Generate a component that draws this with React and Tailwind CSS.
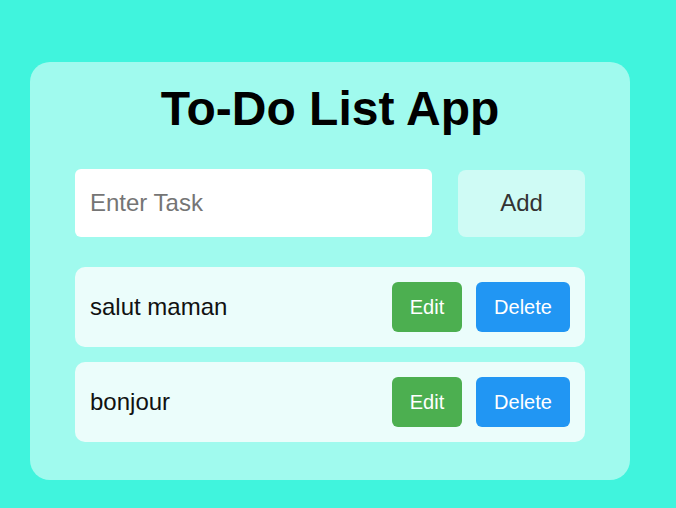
import { useState } from "react";

const App = () => {
  const [tasks, setTasks] = useState(["salut maman", "bonjour"]);
  const [text, setText] = useState("");

  const handleAdd = () => {
    if (!text.trim()) return;
    setTasks(prev => [...prev, text]);
    setText("");
  };

  const handleDelete = (idx) => {
    setTasks(prev => prev.filter((_, i) => i !== idx));
  };

  return (
    <div className="min-h-screen bg-[#40f4dd] font-['Liberation_Sans',Arial,sans-serif]">
      <div className="w-[660px] flex justify-center pt-[62px] pb-[28px]">
        <div className="w-[600px] bg-[#a0faee] rounded-[20px] px-[45px] pt-[19px] pb-[38px]">
          <h1 className="text-[48px] leading-[55px] font-bold text-black text-center mb-[33px]">
            To-Do List App
          </h1>
          <div className="flex items-center justify-between mb-[30px]">
            <input
              type="text"
              placeholder="Enter Task"
              className="w-[357px] h-[68px] bg-white rounded-[6px] px-[15px] text-[24px] text-black placeholder:text-[#757575] outline-none"
              value={text}
              onChange={e => setText(e.target.value)}
            />
            <button
              className="w-[127px] h-[67px] bg-[#cffbf5] rounded-[8px] text-[24px] text-[#333]"
              onClick={handleAdd}
            >
              Add
            </button>
          </div>
          <ul className="flex flex-col gap-[15px]">
            {tasks.map((item, idx) => (
              <li
                key={idx}
                className="h-[80px] bg-[#ebfdfb] rounded-[10px] pl-[15px] pr-[15px] flex items-center justify-between"
              >
                <span className="text-[24px] text-[#111]">{item}</span>
                <div className="flex gap-[14px]">
                  <button className="w-[70px] h-[50px] bg-[#4caf50] rounded-[6px] text-[20px] text-white">
                    Edit
                  </button>
                  <button
                    className="w-[94px] h-[50px] bg-[#2196f3] rounded-[6px] text-[20px] text-white"
                    onClick={() => handleDelete(idx)}
                  >
                    Delete
                  </button>
                </div>
              </li>
            ))}
          </ul>
        </div>
      </div>
    </div>
  );
};

export default App;
